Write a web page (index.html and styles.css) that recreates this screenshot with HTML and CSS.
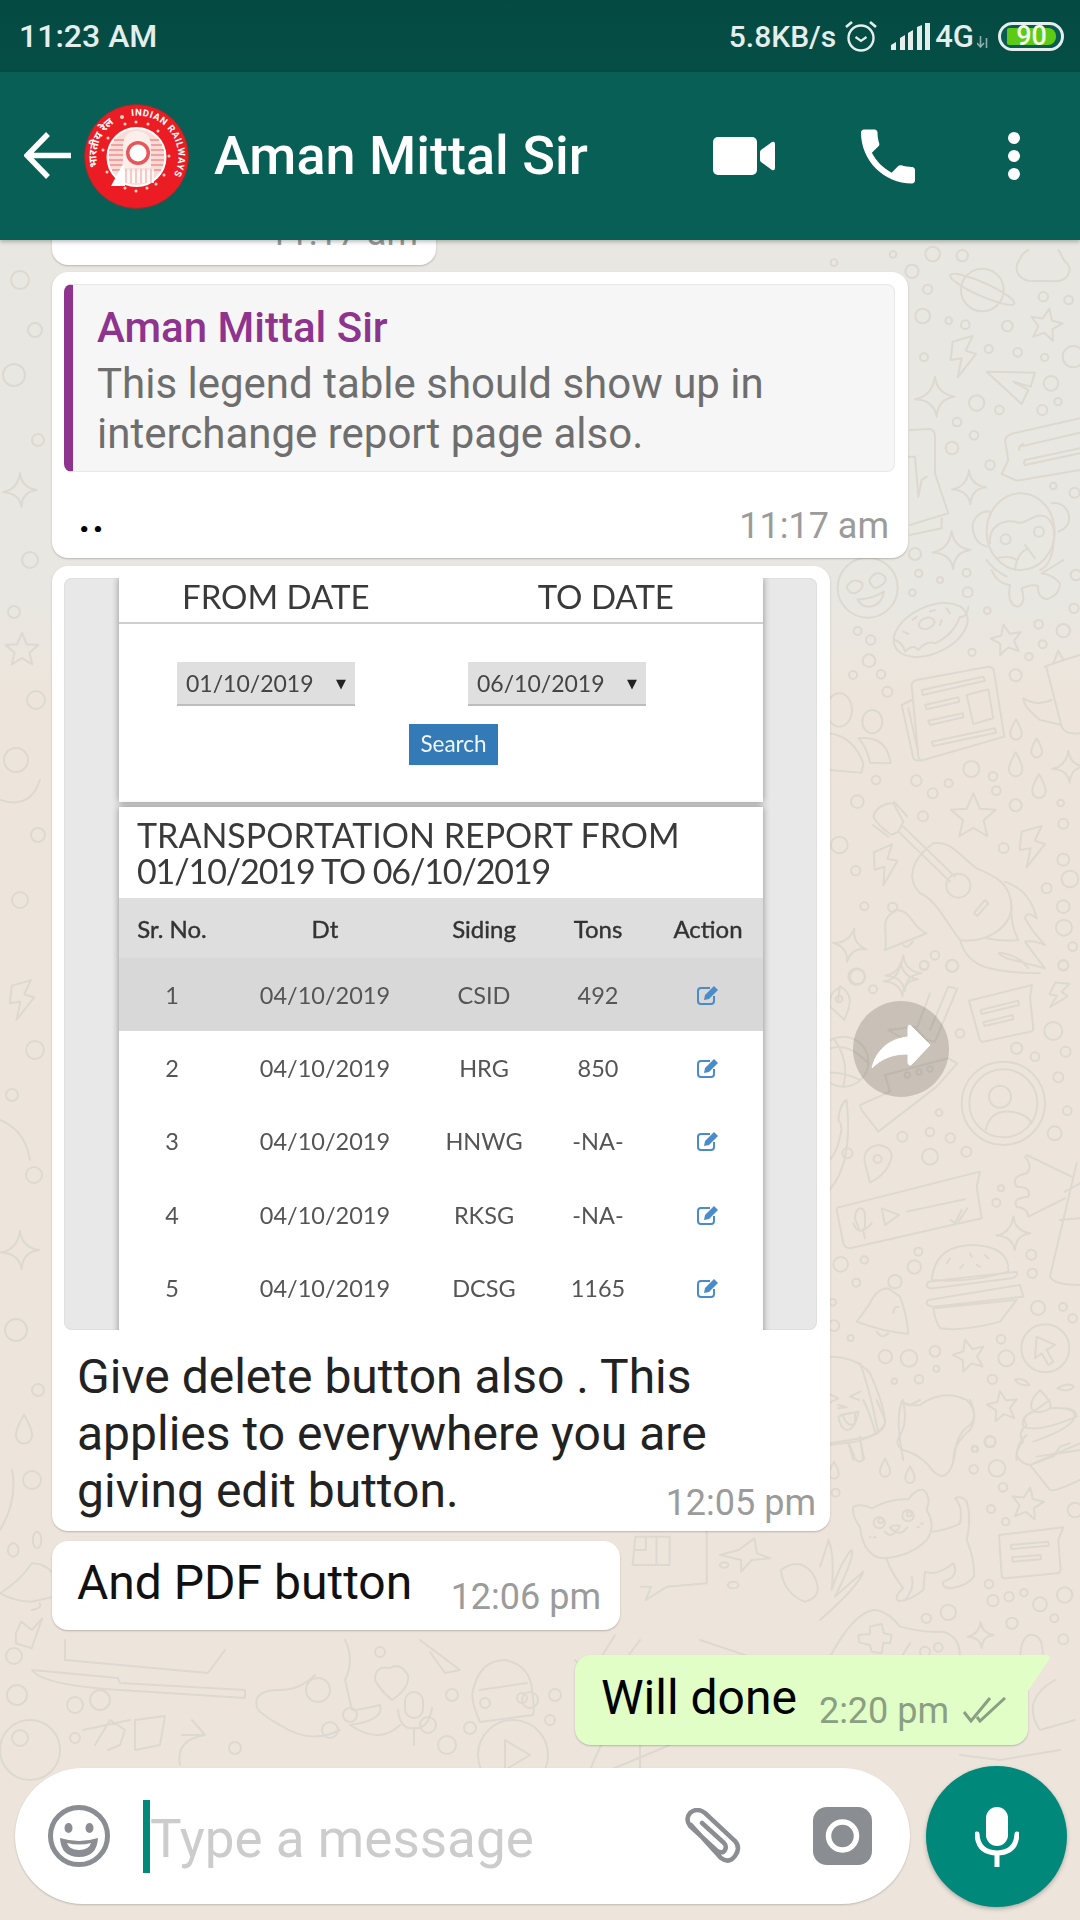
FILE: index.html
```html
<!DOCTYPE html>
<html lang="en">
<head>
<meta charset="utf-8">
<title>Aman Mittal Sir</title>
<link rel="stylesheet" href="styles.css">
</head>
<body>
<div class="phone">
  <div class="status">
    <span class="clock">11:23 AM</span>
    <div class="status-right">
      <span class="speed">5.8KB/s</span>
      <svg class="alarm" viewBox="0 0 32 32"><circle cx="16" cy="18" r="12.500" fill="none" stroke="#e4eeec" stroke-width="2.400"/><path d="M10.500 17l5.500 4 5.500-4" fill="none" stroke="#e4eeec" stroke-width="2.200"/><path d="M1 7l6-5M31 7l-6-5" fill="none" stroke="#e4eeec" stroke-width="2.600"/></svg>
      <svg class="signal" viewBox="0 0 39 27"><path d="M0 27v-5l5-3v8zM9 27V15l5-3v15zM17 27V10l5-3v20zM26 27V4l5-2v25zM34 27V0h5v27z" fill="#e4eeec"/></svg>
      <span class="net">4G</span>
      <svg class="arrows" viewBox="0 0 12 12"><path d="M3.500 0v10M0 7l3.500 4 3.500-4M9.500 12V2" fill="none" stroke="#8fb0aa" stroke-width="1.600"/></svg>
      <div class="battery"><div class="battery-fill">90</div></div>
    </div>
  </div>

  <header class="topbar">
    <svg class="back" viewBox="0 0 48 48"><path d="M47 23.500H4M24 2L3 23.500 24 45" fill="none" stroke="#fff" stroke-width="5.500"/></svg>
    <svg class="avatar" viewBox="0 0 105 105">
      <defs>
        <path id="ring-right" d="M47.500 12A41 41 0 1 1 39 91"/>
        <path id="ring-left" d="M14 63A40 40 0 0 1 35.600 16.200"/>
      </defs>
      <circle cx="52.500" cy="52.500" r="52" fill="#ec1c24" stroke="#7a3a34" stroke-width="1"/>
      <text class="emblem-text"><textPath href="#ring-right">INDIAN RAILWAYS</textPath></text>
      <text class="emblem-hindi"><textPath href="#ring-left">भारतीय रेल</textPath></text>
      <g fill="#fbd3c9"><circle cx="38" cy="13" r="2"/><circle cx="41" cy="20" r="1.500"/><circle cx="52" cy="18" r="1.500"/><circle cx="64" cy="20" r="1.500"/><circle cx="74" cy="27" r="1.500"/><circle cx="85" cy="52" r="1.500"/><circle cx="80" cy="71" r="1.500"/><circle cx="72" cy="80" r="1.500"/><circle cx="63" cy="84" r="1.500"/><circle cx="52" cy="87" r="1.500"/><circle cx="41" cy="84" r="1.500"/><circle cx="23" cy="68" r="1.500"/><circle cx="19" cy="46" r="1.500"/><circle cx="24" cy="34" r="1.500"/></g>
      <circle cx="52.500" cy="53" r="29" fill="#f9dcd6" stroke="#fff" stroke-width="2"/>
      <path d="M30 36h45M27 41h51M25 46h55M25 51h55M25 56h55M26 61h53M28 66h49" stroke="#e8666a" stroke-width="1.200" fill="none"/>
      <path d="M39 64V40Q41 27 53 27 65 27 67 40V64Z" fill="#fbeeeb"/>
      <circle cx="54" cy="49" r="12" fill="#e8565a"/><circle cx="54" cy="49" r="8.500" fill="#fff"/>
      <path d="M38 65H70V79H38Z" fill="#fff" opacity=".8"/>
      <path d="M42 65v14M47 65v14M52 65v14M57 65v14M62 65v14M67 65v14" stroke="#ef9a9a" stroke-width="1"/>
      <path d="M27 82L40 58 41 82Z" fill="#fff"/>
    </svg>
    <h1 class="title">Aman Mittal Sir</h1>
    <svg class="ico-video" viewBox="0 0 62 38"><rect width="44" height="38" rx="5" fill="#fff"/><path d="M47 15q0-1 1-2l11-8q3-1 3 2v24q0 3-3 2l-11-8q-1-1-1-2z" fill="#fff"/></svg>
    <svg class="ico-call" viewBox="3 3 18 18"><path d="M6.620 10.790c1.440 2.830 3.760 5.140 6.590 6.590l2.200-2.200c.27-.27.67-.36 1.020-.24 1.120.37 2.330.57 3.570.57.55 0 1 .45 1 1V20c0 .55-.45 1-1 1-9.390 0-17-7.610-17-17 0-.55.45-1 1-1h3.500c.55 0 1 .45 1 1 0 1.250.2 2.450.57 3.570.11.35.03.74-.25 1.020l-2.200 2.200z" fill="#fff"/></svg>
    <div class="ico-more"><i></i><i></i><i></i></div>
  </header>

  <main class="main">
    <svg class="doodles" viewBox="0 240 1080 1680" aria-hidden="true">
      <defs>
        <path id="star" d="M0-50L14-17 48-15 22 8 30 42 0 24-30 42-22 8-48-15-14-17Z"/>
        <path id="spark" d="M0-60Q6-8 60 0 8 6 5 60-4 10-60 8-8-2 0-60Z"/>
        <path id="drop" d="M0-38Q-22 0-20 14A20 20 0 0 0 20 14Q22 0 0-38Z"/>
        <path id="bolt" d="M28-62L-32-45-38 10-5 5-17 62 38-8 7-18Z"/>
      </defs>

      <g>
        <circle cx="20" cy="280" r="9"/><circle cx="35" cy="330" r="7"/><circle cx="14" cy="375" r="11"/><circle cx="38" cy="440" r="6"/><circle cx="30" cy="560" r="8"/><circle cx="14" cy="612" r="6"/><circle cx="36" cy="700" r="9"/><circle cx="16" cy="760" r="12"/><circle cx="38" cy="835" r="7"/><circle cx="20" cy="900" r="8"/><circle cx="35" cy="1050" r="9"/><circle cx="12" cy="1095" r="6"/><circle cx="34" cy="1175" r="8"/><circle cx="16" cy="1330" r="11"/><circle cx="38" cy="1390" r="6"/><circle cx="32" cy="1480" r="9"/>
        <use href="#spark" transform="translate(20 490) scale(.28)"/>
        <use href="#star" transform="translate(22 650) scale(.34)"/>
        <use href="#bolt" transform="translate(22 1000) scale(.32)"/>
        <use href="#spark" transform="translate(20 1250) scale(.32)"/>
        <use href="#drop" transform="translate(24 1430) scale(.4)"/>
        <path d="M0 1120Q25 1130 30 1160M0 800Q30 810 40 780M0 1530Q18 1500 12 1470"/>
      </g>

      <g transform="translate(820 250) scale(.3333)">
        <circle cx="42" cy="38" r="10"/><circle cx="219" cy="13" r="10"/><circle cx="338" cy="12" r="22"/><circle cx="427" cy="17" r="17"/><circle cx="276" cy="64" r="20"/><circle cx="323" cy="118" r="14"/><circle cx="308" cy="198" r="22"/><circle cx="386" cy="212" r="10"/><circle cx="436" cy="224" r="13"/><circle cx="562" cy="228" r="16"/><circle cx="670" cy="140" r="14"/><circle cx="746" cy="150" r="13"/><circle cx="506" cy="297" r="12"/><circle cx="593" cy="307" r="13"/><circle cx="674" cy="322" r="11"/><circle cx="312" cy="322" r="12"/><circle cx="470" cy="459" r="23"/><circle cx="538" cy="480" r="13"/><circle cx="693" cy="400" r="22"/><circle cx="714" cy="455" r="11"/><circle cx="667" cy="480" r="15"/><circle cx="411" cy="516" r="13"/><circle cx="462" cy="556" r="13"/><circle cx="396" cy="594" r="19"/><circle cx="510" cy="645" r="14"/><circle cx="700" cy="708" r="10"/><circle cx="764" cy="728" r="15"/><circle cx="285" cy="912" r="18"/><circle cx="760" cy="320" r="32"/>
        <circle cx="487" cy="120" r="64"/><ellipse cx="487" cy="118" rx="105" ry="20" transform="rotate(24 487 118)"/>
        <path d="M600 28C580 50 590 85 625 92L710 94C750 90 760 50 735 35 725 22 722 8 715 0M625 0C610 8 602 18 600 28"/>
        <use href="#star" transform="translate(678 225) rotate(12)"/>
        <path d="M458 258L398 275 392 330 425 325 413 382 468 312 437 302Z"/>
        <path d="M500 365L645 368 632 410 580 395 625 420 605 462Z"/>
        <path d="M555 570Q560 555 580 550L780 505M780 660L590 692 545 672 565 630 555 570"/>
        <path d="M600 590L780 548M598 600Q595 585 610 582M615 630L780 595M615 645L780 610M615 630Q610 640 615 645"/>
        <use href="#spark" transform="translate(345 440)"/>
        <use href="#spark" transform="translate(447 712) scale(.85)"/>
        <use href="#spark" transform="translate(395 900) scale(.95)"/>
        <path d="M270 540L330 537Q345 540 345 560L345 670 385 790 270 825M270 855L365 835 365 805M265 620L285 620 295 740 305 690 320 680"/>
        <ellipse cx="602" cy="845" rx="102" ry="115"/>
        <path d="M510 785C480 780 450 810 460 845 465 870 480 885 500 890M695 760C730 755 755 785 745 820 740 830 730 840 715 845"/>
        <path d="M510 880C505 830 545 810 585 815 605 825 620 810 650 798 690 790 710 830 700 885"/>
        <circle cx="557" cy="868" r="15"/><circle cx="657" cy="845" r="15"/>
        <path d="M530 925Q570 915 590 930M585 960Q590 910 625 895M615 885L645 925M700 890Q690 950 660 960"/>
      </g>

      <g transform="translate(820 560) scale(.3333)">
        <circle cx="143" cy="83" r="90"/><path d="M80 80Q100 50 125 68 135 85 105 100 85 100 80 80ZM148 60Q170 25 195 50 205 70 165 85 150 75 148 60ZM112 118Q150 120 192 95 185 135 150 140 125 142 112 118Z"/>
        <circle cx="296" cy="40" r="11"/><circle cx="360" cy="60" r="9"/><circle cx="440" cy="38" r="12"/><circle cx="277" cy="98" r="10"/><circle cx="443" cy="97" r="15"/><circle cx="768" cy="45" r="16"/><circle cx="502" cy="152" r="10"/><circle cx="762" cy="145" r="14"/><circle cx="656" cy="193" r="13"/><circle cx="730" cy="212" r="20"/><circle cx="113" cy="213" r="12"/><circle cx="152" cy="240" r="14"/><circle cx="456" cy="277" r="11"/><circle cx="668" cy="253" r="12"/><circle cx="627" cy="290" r="11"/><circle cx="147" cy="302" r="19"/><circle cx="99" cy="345" r="12"/><circle cx="183" cy="343" r="13"/><circle cx="587" cy="346" r="18"/><circle cx="202" cy="395" r="15"/><circle cx="168" cy="660" r="13"/><circle cx="289" cy="662" r="16"/><circle cx="338" cy="700" r="15"/><circle cx="386" cy="670" r="12"/><circle cx="454" cy="627" r="24"/><circle cx="519" cy="649" r="13"/><circle cx="529" cy="692" r="13"/><circle cx="112" cy="725" r="19"/><circle cx="587" cy="736" r="18"/><circle cx="722" cy="729" r="10"/><circle cx="309" cy="769" r="15"/><circle cx="730" cy="791" r="15"/><circle cx="551" cy="864" r="15"/><circle cx="730" cy="899" r="18"/><circle cx="750" cy="957" r="25"/><circle cx="58" cy="855" r="25"/><circle cx="107" cy="932" r="14"/><circle cx="680" cy="985" r="15"/><circle cx="730" cy="1040" r="19"/><circle cx="732" cy="1103" r="24"/><circle cx="133" cy="1039" r="12"/><circle cx="758" cy="1160" r="13"/><circle cx="345" cy="1186" r="13"/><circle cx="312" cy="1217" r="13"/><circle cx="396" cy="1218" r="18"/><circle cx="730" cy="1217" r="15"/><circle cx="110" cy="1250" r="25"/>
        <path d="M515 30Q530 70 570 75 560 130 590 140 620 135 605 85 640 70 655 80 650 110 680 118 720 105 720 70 700 45 665 40 700 20 730 0M500 0Q520 30 560 50"/>
        <ellipse cx="332" cy="210" rx="118" ry="70" transform="rotate(-25 332 210)"/><ellipse cx="320" cy="190" rx="24" ry="16" transform="rotate(-20 320 190)"/>
        <path d="M225 240Q250 250 255 275 280 250 295 270 320 240 345 250 400 225 420 170 440 175 445 140"/>
        <path d="M278 180L290 170M250 215L265 222M380 145L390 160M365 180L360 195M345 150L330 155"/>
        <use href="#star" transform="translate(560 240) rotate(-12) scale(.95)"/>
        <path d="M275 375Q275 365 290 360L505 320Q520 320 522 335L553 530 310 600Q300 605 295 590ZM275 420L245 435 280 595Q285 605 310 600M265 445L293 570"/>
        <path d="M305 390L490 350 495 362 308 405ZM315 435L415 412 418 425 320 448ZM325 482L428 460 430 472 330 495ZM335 545L525 505 528 518 340 558ZM440 405L505 388 520 475 460 492Z"/>
        <ellipse cx="58" cy="450" rx="38" ry="50"/><path d="M28 520Q100 530 130 610L125 638 28 630"/>
        <ellipse cx="157" cy="485" rx="30" ry="35"/><path d="M115 535Q200 525 212 610L150 608Q140 560 115 535Z"/>
        <use href="#drop" transform="translate(588 510) scale(.85)"/><use href="#drop" transform="translate(650 565) scale(.8)"/><use href="#drop" transform="translate(587 615)"/><use href="#drop" transform="translate(657 680)"/>
        <path d="M675 320Q700 310 780 285M680 325L725 500Q735 525 780 520M610 415Q650 440 695 420M610 415Q610 440 660 480L725 495M700 310L715 272 730 300"/>
        <use href="#spark" transform="translate(745 620) scale(.8)"/>
        <use href="#star" transform="translate(460 770) scale(1.400)"/>
        <path d="M212 730Q170 735 160 770 170 795 215 825L235 815 250 785 220 730ZM235 815L390 965M250 800L405 950"/>
        <path d="M222 725L262 770M158 795L205 830"/>
        <circle cx="415" cy="977" r="36"/>
        <path d="M340 850C395 840 420 890 470 925 530 950 570 970 575 1040 570 1110 490 1150 420 1140 380 1090 350 1020 300 1000 260 960 270 900 340 850Z"/>
        <path d="M462 1060L495 1020 505 1030 472 1068Z"/>
        <path d="M555 965Q630 990 650 1075 620 1050 615 1075 640 1120 675 1155 640 1140 615 1145 640 1180 675 1225L560 1195Q520 1175 550 1180 600 1190 625 1225M420 1140Q440 1210 510 1225 570 1240 660 1240M500 1135Q545 1145 595 1140 570 1090 575 1040"/>
        <use href="#bolt" transform="translate(637 860)"/>
        <use href="#bolt" transform="translate(198 915) scale(.95) rotate(-8)"/>
        <path d="M215 1060C180 1080 205 1130 195 1170L320 1120C270 1100 280 1050 225 1050ZM250 1155Q260 1170 278 1145"/><circle cx="218" cy="1042" r="14"/>
        <use href="#spark" transform="translate(90 1155) scale(.85) rotate(15)"/>
        <use href="#spark" transform="translate(250 1240) scale(.9)"/>
      </g>

      <g transform="translate(820 960) scale(.3333)">
        <circle cx="313" cy="15" r="13"/><circle cx="397" cy="17" r="18"/><circle cx="112" cy="50" r="22"/><circle cx="159" cy="88" r="12"/><circle cx="730" cy="15" r="15"/><circle cx="420" cy="220" r="13"/><circle cx="700" cy="213" r="27"/><circle cx="590" cy="265" r="17"/><circle cx="645" cy="290" r="13"/><circle cx="737" cy="275" r="15"/><circle cx="715" cy="352" r="15"/><circle cx="357" cy="458" r="10"/><circle cx="742" cy="452" r="13"/><circle cx="704" cy="520" r="21"/><circle cx="247" cy="530" r="15"/><circle cx="330" cy="516" r="13"/><circle cx="391" cy="534" r="14"/><circle cx="330" cy="590" r="24"/><circle cx="439" cy="575" r="15"/><circle cx="543" cy="685" r="9"/><circle cx="529" cy="728" r="12"/><circle cx="295" cy="875" r="12"/><circle cx="133" cy="900" r="11"/><circle cx="62" cy="913" r="22"/><circle cx="283" cy="921" r="20"/><circle cx="634" cy="884" r="15"/><circle cx="637" cy="940" r="14"/><circle cx="109" cy="968" r="12"/><circle cx="38" cy="1027" r="10"/><circle cx="42" cy="1097" r="16"/><circle cx="654" cy="1044" r="21"/><circle cx="729" cy="1041" r="12"/><circle cx="758" cy="1075" r="13"/><circle cx="92" cy="1134" r="9"/><circle cx="196" cy="1190" r="20"/><circle cx="267" cy="1195" r="25"/><circle cx="345" cy="1174" r="16"/><circle cx="349" cy="1226" r="9"/><circle cx="543" cy="1138" r="13"/><circle cx="559" cy="1195" r="24"/><circle cx="223" cy="1264" r="8"/><circle cx="297" cy="1258" r="13"/><circle cx="517" cy="1258" r="14"/><circle cx="511" cy="1445" r="15"/><circle cx="465" cy="1467" r="9"/>
        <use href="#spark" transform="translate(243 58) scale(.85)"/>
        <use href="#bolt" transform="translate(716 105) scale(.7) rotate(20)"/>
        <path d="M447 122L636 75 630 112 640 205Q640 215 630 215L490 245Q480 245 478 235Z"/><path d="M482 150L595 122 597 135 485 162ZM490 187L578 165 580 178 493 198Z"/>
        <circle cx="70" cy="305" r="75"/><path d="M0 280Q70 230 145 310M40 235Q90 300 70 380M0 340Q60 330 120 360"/>
        <path d="M330 100L285 220M412 85L345 245 320 240 285 200 205 210 255 240M405 85L385 80 330 210"/>
        <path d="M195 345L385 295 412 310 350 380 175 515 125 450 120 435 210 395Z"/><circle cx="262" cy="345" r="8"/><circle cx="297" cy="336" r="8"/><circle cx="330" cy="327" r="8"/>
        <circle cx="550" cy="430" r="125"/><circle cx="550" cy="430" r="102"/><circle cx="540" cy="410" r="33"/><path d="M497 510Q510 450 570 455 620 460 635 490"/>
        <path d="M175 555Q215 560 215 590 205 640 150 668L135 610Q125 565 175 555Z"/><circle cx="173" cy="597" r="12"/>
        <path d="M55 120Q60 70 60 80 85 90 90 120 88 150 72 180 55 160 30 140 25 100 55 85"/><circle cx="57" cy="117" r="10"/>
        <path d="M28 690Q100 610 80 420 60 430 55 480 70 500 60 530 50 580 28 600"/><circle cx="82" cy="580" r="15"/>
        <path d="M65 740L480 635 470 680 485 775 90 865Q75 865 70 850L50 750Q50 740 65 740Z"/>
        <path d="M120 745Q135 745 135 770L135 800Q130 815 118 810L105 775Q105 750 120 745ZM100 790Q115 835 155 790M130 815L135 835M185 745L237 765 195 795ZM260 755L435 718"/>
        <path d="M392 780L405 790 425 750M415 785L442 745"/>
        <path d="M620 585L755 650M615 590Q640 620 620 640 570 650 590 680 635 680 625 710 575 715 590 740 625 745 625 770L735 715"/>
        <path d="M770 610L690 950Q700 975 780 975M735 695Q780 670 780 670M720 780L780 775"/>
        <use href="#spark" transform="translate(580 820) scale(.85)"/>
        <path d="M335 960Q345 855 460 855 570 860 565 935 450 970 335 960ZM325 965L590 935Q595 950 575 955L340 985Q310 985 325 965ZM325 1020L600 975 610 1010 340 1040Q310 1035 325 1020ZM340 1045L590 1020 540 1085Q430 1115 360 1105 345 1080 340 1045Z"/>
        <path d="M380 910L390 895M420 925L430 915M450 880L455 890M495 885L505 895M470 915L480 920"/>
        <path d="M205 985Q170 985 150 1030 130 1060 110 1085 190 1115 265 1122 260 1060 240 1010ZM235 1040Q220 1040 220 1060"/><circle cx="225" cy="965" r="20"/><path d="M170 1115Q185 1140 205 1120"/>
        <circle cx="676" cy="1165" r="72"/><path d="M650 1130L705 1155 680 1170 700 1205 685 1215 665 1180 645 1195Z"/>
        <use href="#star" transform="translate(448 1187) rotate(-15)"/>
        <use href="#star" transform="translate(548 1340) rotate(-10) scale(.95)"/>
        <path d="M28 1190Q110 1190 150 1240 195 1340 195 1390 185 1420 110 1445L28 1455M120 1210Q150 1290 175 1420M25 1300L55 1315 25 1330M120 1295L90 1310 118 1320M55 1370Q85 1360 115 1355 105 1410 80 1410 60 1405 55 1370ZM85 1450L100 1500M120 1430L130 1500"/>
        <path d="M250 1500Q225 1380 245 1325 270 1340 300 1335 370 1285 440 1320 480 1360 450 1410 400 1450 400 1500"/>
        <path d="M660 1290Q620 1330 640 1355 600 1370 620 1395 590 1420 610 1445 585 1470 590 1500M660 1290Q700 1330 690 1345 780 1340 760 1380 740 1410 640 1445M640 1355Q670 1360 690 1345"/>
        <path d="M585 1260Q610 1250 628 1275 600 1280 585 1260ZM712 1285Q745 1265 762 1280 745 1300 712 1285ZM780 1470Q720 1480 650 1490"/>
      </g>

      <g transform="translate(820 1400) scale(.3333)">
        <path d="M100 320Q125 310 155 325 210 295 265 298 290 265 310 270 335 290 320 330 350 380 320 420 270 470 190 475 130 470 120 380 95 350 100 320Z"/>
        <circle cx="178" cy="368" r="17"/><circle cx="264" cy="347" r="17"/><circle cx="182" cy="362" r="7"/><circle cx="268" cy="342" r="7"/>
        <path d="M210 382Q225 372 240 378 235 392 225 392 215 392 210 382ZM195 395Q210 415 228 395 245 405 262 382M148 412L152 412M162 412L166 412M293 382L297 380M304 372L308 370"/>
        <path d="M200 478Q215 520 250 565 220 590 235 603 265 605 310 570L315 515Q350 530 400 490 420 530 370 545 365 565 395 565 445 555 462 530 465 480 440 420 455 350 440 305 425 285 405 295 430 320 420 370 400 385 340 395M275 530Q285 565 255 600"/>
        <path d="M250 0Q240 10 270 15L300 0M450 0Q475 50 450 75 410 100 405 160 395 225 365 228 345 225 325 195 290 160 250 150 225 135 235 115 265 70 250 10"/>
        <path d="M30 130L150 110Q200 90 195 60L170 0M85 125L105 175Q120 195 132 175L120 120M60 45L115 35M70 50Q85 85 105 70L105 40M130 0Q150 40 165 95M55 15L80 22 55 25"/>
        <use href="#drop" transform="translate(195 205) scale(.75)"/><use href="#drop" transform="translate(270 225) scale(.7)"/><use href="#drop" transform="translate(42 212) scale(.7)"/>
        <circle cx="510" cy="125" r="17"/><circle cx="464" cy="147" r="9"/><circle cx="531" cy="205" r="25"/><circle cx="461" cy="208" r="13"/><circle cx="549" cy="262" r="13"/><circle cx="513" cy="327" r="12"/><circle cx="557" cy="365" r="11"/><circle cx="765" cy="330" r="22"/><circle cx="507" cy="552" r="13"/><circle cx="519" cy="602" r="17"/><circle cx="567" cy="590" r="14"/><circle cx="612" cy="578" r="11"/><circle cx="660" cy="613" r="21"/><circle cx="734" cy="585" r="23"/><circle cx="703" cy="655" r="12"/><circle cx="576" cy="670" r="17"/><circle cx="730" cy="718" r="15"/><circle cx="319" cy="655" r="14"/><circle cx="385" cy="637" r="23"/><circle cx="47" cy="278" r="12"/><circle cx="315" cy="755" r="15"/><circle cx="355" cy="742" r="13"/>
        <use href="#star" transform="translate(622 312) rotate(10)"/>
        <path d="M537 405L730 382 715 420 722 510Q720 520 710 520L555 535Q545 535 545 525Z"/><path d="M572 435L685 425 686 437 574 447ZM576 472L662 465 663 478 578 485Z"/>
        <path d="M620 105Q590 130 590 165 600 190 630 195L690 270Q700 278 780 240M640 190L780 130M610 80Q650 100 770 50 770 30 740 25M610 80Q600 50 640 35L690 0M630 195L700 170 720 140 750 130"/>
        <use href="#spark" transform="translate(482 705) scale(.65)"/>
        <path d="M0 500Q30 410 25 420 45 470 35 570 65 480 95 450 105 470 45 590 100 540 130 515 115 560 0 660"/>
        <path d="M30 770Q100 640 160 630 200 630 240 680 320 700 370 695 420 710 420 770"/>
        <path d="M150 680L185 672 192 700 215 705 210 730 190 728 185 760 155 755 150 735 118 728 115 705 150 702ZM270 730L245 770 260 770"/>
        <path d="M600 770Q605 700 640 705 670 710 668 770"/>
      </g>

      <g transform="translate(0 1530) scale(.5294 .3333)">
        <path d="M1200 20L1195 105 1265 105 1265 20ZM1220 25V60H1200M1240 25V105M1335 20V160L1260 170 1220 210 1230 170 1210 170M1335 0V20"/>
        <path d="M0 190Q40 150 60 100 85 100 100 130 130 170 160 175 110 200 60 215 30 215 0 190ZM75 220Q80 235 60 240M40 275L60 300 80 265 65 330 60 355 30 340 30 310 40 275Z"/>
        <ellipse cx="70" cy="30" rx="8" ry="25"/><ellipse cx="25" cy="60" rx="10" ry="20"/>
        <path d="M1395 60L1425 25 1430 70 1455 85 1420 90 1400 125 1400 90 1360 75ZM1475 120Q1510 80 1535 130 1560 200 1520 215 1480 190 1475 120Z"/>
        <circle cx="1368" cy="105" r="8"/><circle cx="1385" cy="165" r="10"/>
      </g>

      <g>
        <circle cx="14" cy="1656" r="8"/><circle cx="17" cy="1695" r="10"/><circle cx="100" cy="1700" r="10"/><circle cx="75" cy="1705" r="8"/><circle cx="20" cy="1738" r="8"/><circle cx="75" cy="1738" r="5"/><circle cx="235" cy="1748" r="6"/><circle cx="380" cy="1652" r="5"/><circle cx="318" cy="1690" r="12"/><circle cx="330" cy="1730" r="8"/><circle cx="350" cy="1715" r="7"/><circle cx="428" cy="1725" r="8"/><circle cx="447" cy="1745" r="9"/><circle cx="470" cy="1728" r="6"/><circle cx="530" cy="1700" r="8"/><circle cx="550" cy="1720" r="5"/><circle cx="452" cy="1695" r="6"/><circle cx="555" cy="1695" r="6"/>
        <path d="M65 1640L65 1660 208 1673 225 1650M32 1670L118 1678 120 1683 245 1690 245 1698 120 1690Q42 1685 32 1670Z"/>
        <path d="M345 1640Q355 1660 345 1680L352 1710Q360 1710 380 1705 385 1720 350 1725 380 1745 400 1725M315 1675Q300 1690 280 1690 250 1690 258 1710 270 1720 280 1725 310 1745 340 1730"/>
        <path d="M390 1668Q375 1665 375 1680 380 1690 392 1700 410 1688 408 1675 400 1662 390 1668Z"/>
        <path d="M473 1690Q480 1660 505 1660 530 1665 532 1690 535 1710 533 1715L480 1722Q470 1700 473 1690ZM480 1690L527 1683"/><circle cx="485" cy="1703" r="5"/><circle cx="522" cy="1698" r="5"/>
        <rect x="405" y="1692" width="18" height="26" rx="9"/><path d="M398 1710Q400 1730 414 1728 428 1730 432 1708M414 1728V1745"/>
        <path d="M420 1640L460 1670 445 1673 430 1652M590 1675L615 1635M610 1680L640 1640M575 1660L610 1700M760 1660L700 1640"/>
        <circle cx="30" cy="1750" r="30"/><circle cx="513" cy="1755" r="35"/><path d="M505 1740L530 1755 505 1770Z"/>
        <path d="M83 1730L130 1720M95 1745L110 1720 125 1730 120 1745 108 1750M135 1720L165 1716 160 1745 135 1750ZM205 1735Q175 1740 180 1765M205 1735L192 1720M205 1735L182 1735"/>
        <path d="M610 1730Q600 1745 590 1770M640 1700V1770M670 1745L610 1770M630 1730L655 1720Q680 1735 640 1745"/>
        <path d="M1055 1680Q1020 1700 1040 1730L1075 1720M960 1755L1000 1760 1060 1750"/>
      </g>
    </svg>

    <section class="chat">
      <article class="bubble stub"><span class="time">11:17 am</span></article>

      <article class="bubble reply">
        <blockquote class="quote">
          <strong class="quote-name">Aman Mittal Sir</strong>
          <p class="quote-text">This legend table should show up in<br>interchange report page also.</p>
        </blockquote>
        <div class="reply-row"><span class="dots">..</span><span class="time">11:17 am</span></div>
      </article>

      <div class="image-row">
        <article class="bubble media">
          <div class="shot">
            <div class="shot-card filter-card">
              <div class="date-heads"><span>FROM DATE</span><span>TO DATE</span></div>
              <div class="date-selects">
                <div class="select"><span>01/10/2019</span><b>▼</b></div>
                <div class="select"><span>06/10/2019</span><b>▼</b></div>
              </div>
              <div class="search">Search</div>
            </div>
            <div class="shot-card report-card">
              <h2 class="report-title">TRANSPORTATION REPORT FROM<br><span class="report-dates">01/10/2019 TO 06/10/2019</span></h2>
              <div class="t-row t-head"><span>Sr. No.</span><span>Dt</span><span>Siding</span><span>Tons</span><span>Action</span></div>
              <div class="t-row t-hi"><span>1</span><span>04/10/2019</span><span>CSID</span><span>492</span><span><svg class="edit" viewBox="0 0 22 20"><use href="#edit-icon"/></svg></span></div>
              <div class="t-row"><span>2</span><span>04/10/2019</span><span>HRG</span><span>850</span><span><svg class="edit" viewBox="0 0 22 20"><use href="#edit-icon"/></svg></span></div>
              <div class="t-row"><span>3</span><span>04/10/2019</span><span>HNWG</span><span>-NA-</span><span><svg class="edit" viewBox="0 0 22 20"><use href="#edit-icon"/></svg></span></div>
              <div class="t-row"><span>4</span><span>04/10/2019</span><span>RKSG</span><span>-NA-</span><span><svg class="edit" viewBox="0 0 22 20"><use href="#edit-icon"/></svg></span></div>
              <div class="t-row"><span>5</span><span>04/10/2019</span><span>DCSG</span><span>1165</span><span><svg class="edit" viewBox="0 0 22 20"><use href="#edit-icon"/></svg></span></div>
            </div>
          </div>
          <p class="caption">Give delete button also . This applies to everywhere you are giving edit button.<span class="time time-float">12:05 pm</span></p>
        </article>
        <div class="forward"><svg viewBox="0 0 96 96"><path d="M77 44L57 24Q55 24 55 27L55 36C35 38 23 50 19 67 29 57 40 53 55 53L55 62Q56 65 58 64Z" fill="#fff" stroke="#fff" stroke-linejoin="round"/></svg></div>
      </div>

      <article class="bubble line pdf"><p class="line-text">And PDF button</p><span class="time line-time">12:06 pm</span></article>

      <article class="bubble line sent"><p class="line-text">Will done</p><span class="time line-time">2:20 pm</span>
        <svg class="ticks" viewBox="0 0 44 26"><path d="M1 15l7 9L27 1M14 20l3 4L42 1" fill="none" stroke="#8b9f83" stroke-width="3"/></svg>
      </article>
    </section>

    <form class="composer">
      <div class="input">
        <svg class="emoji" viewBox="0 0 64 64"><circle cx="32" cy="32" r="28.500" fill="#fff" stroke="#8a8d91" stroke-width="5"/><ellipse cx="21.500" cy="24" rx="4" ry="5" fill="#8a8d91"/><ellipse cx="42.500" cy="24" rx="4" ry="5" fill="#8a8d91"/><path d="M13 34Q32 40 51 34 50 53 32 53 14 53 13 34Z" fill="#8a8d91"/><path d="M20 39Q32 42 44 39 42 46 32 46 22 46 20 39Z" fill="#fff"/></svg>
        <i class="cursor"></i>
        <span class="placeholder">Type a message</span>
        <svg class="clip" viewBox="0 0 64 56"><path d="M14 17L44 50Q52 56 58 48 64 40 58 33L28 5Q20 -1 13 5 8 11 13 18L40 43Q46 46 48 42 50 38 47 35L25 15" fill="none" stroke="#8a8d91" stroke-width="4.500" stroke-linecap="round"/></svg>
        <svg class="camera" viewBox="0 0 59 58"><rect width="59" height="58" rx="14" fill="#8a8d91"/><circle cx="29.500" cy="29" r="14" fill="none" stroke="#fff" stroke-width="5.500"/></svg>
      </div>
      <div class="mic"><svg viewBox="0 0 44 60"><rect x="11" y="0" width="22" height="39" rx="11" fill="#fff"/><path d="M2 27Q3 46 22 46 41 46 42 27" fill="none" stroke="#fff" stroke-width="5" stroke-linecap="round"/><path d="M22 46v14" stroke="#fff" stroke-width="5"/></svg></div>
    </form>
  </main>
  <svg class="defs-only" aria-hidden="true"><defs><g id="edit-icon"><path d="M17 11v5q0 3-3 3H4q-3 0-3-3V6q0-3 3-3h9" fill="none" stroke="#4a8bc9" stroke-width="2"/><path d="M8 10L17 1l4 4-9 9-5 1z" fill="#4a8bc9"/></g></defs></svg>
</div>
</body>
</html>
```

FILE: styles.css
```css
* { box-sizing: border-box; }
html, body { margin: 0; padding: 0; }
body { width: 1080px; height: 1920px; overflow: hidden; font-family: Roboto, "Liberation Sans", sans-serif; background: #ede5dc; }
p, h1, h2, blockquote { margin: 0; font-weight: 400; }

.phone { width: 1080px; height: 1920px; display: flex; flex-direction: column; overflow: hidden; }
.defs-only { width: 0; height: 0; }

/* status bar */
.status { height: 72px; flex: none; background: linear-gradient(#044a42, #054e46); color: #e4eeec; display: flex; align-items: center; justify-content: space-between; padding: 0 16px 0 19px; font-weight: 500; font-size: 30px; }
.clock { font-size: 32px; line-height: 72px; }
.status-right { display: flex; align-items: center; }
.speed { margin-right: 9px; }
.alarm { width: 32px; height: 32px; margin-right: 14px; }
.signal { width: 39px; height: 27px; margin-right: 5px; }
.net { margin-right: 3px; font-size: 31px; }
.arrows { width: 12px; height: 12px; margin: 12px 9px 0 0; }
.battery { width: 66px; height: 29px; border: 3px solid #e4eeec; border-radius: 15px; padding: 3px 3px 3px 6px; background: #0a5b50; }
.battery-fill { height: 17px; width: 49px; background: #5dcb16; border-radius: 2px 8px 8px 2px; color: #f4fbe9; font-size: 27px; line-height: 17px; text-align: center; }

/* app bar */
.topbar { height: 168px; flex: none; background: #085f55; display: flex; align-items: center; padding: 0 60px 0 24px; position: relative; z-index: 2; box-shadow: 0 2px 4px rgba(0,0,0,.25); }
.back { width: 48px; height: 48px; margin-right: 12px; flex: none; }
.avatar { width: 105px; height: 105px; flex: none; margin-right: 25px; }
.emblem-text { fill: #fff; font: 700 9.500px Roboto, sans-serif; letter-spacing: .7px; }
.emblem-hindi { fill: #fff; font: 700 11px "Noto Sans", "Noto Sans CJK SC", sans-serif; }
.title { color: #fff; font-size: 54px; line-height: 60px; font-weight: 500; flex: 1; white-space: nowrap; }
.ico-video { width: 62px; height: 38px; flex: none; margin-right: 86px; }
.ico-call { width: 54px; height: 55px; flex: none; margin-right: 93px; }
.ico-more { width: 12px; flex: none; display: flex; flex-direction: column; gap: 6px; }
.ico-more i { width: 12px; height: 12px; border-radius: 50%; background: #fff; }

/* chat */
.main { flex: 1; min-height: 0; position: relative; display: flex; flex-direction: column; background: linear-gradient(#e9e7e1 0, #e9e7e1 370px, #ede5dc 450px, #ede5dc 100%); }
.doodles { position: absolute; left: 0; top: 0; width: 1080px; height: 1680px; fill: none; stroke: #ddd9d1; stroke-width: 2px; stroke-linejoin: round; stroke-linecap: round; }
.doodles * { vector-effect: non-scaling-stroke; }
.chat { flex: 1; min-height: 0; position: relative; display: flex; flex-direction: column; justify-content: flex-end; align-items: flex-start; overflow: hidden; padding: 0 52px 21px; }

.bubble { background: #fff; border-radius: 16px; box-shadow: 0 1px 2px rgba(0,0,0,.22); flex: none; }
.time { font-size: 36px; line-height: 40px; color: #9b9b9b; white-space: nowrap; }

.stub { width: 384px; padding: 0 18px 12px; text-align: right; margin-bottom: 7px; }
.reply { width: 856px; padding: 12px 13px 12px 12px; margin-bottom: 8px; }
.quote { height: 188px; background: #f6f6f6; border: 1px solid #e8e8e8; border-left: 9px solid #8e338e; border-radius: 8px; padding: 18px 24px 0; }
.quote-name { display: block; color: #8e338e; font-size: 42px; line-height: 50px; font-weight: 500; }
.quote-text { color: #6e6e6e; font-size: 42px; line-height: 50px; margin-top: 6px; }
.reply-row { display: flex; justify-content: space-between; align-items: flex-start; margin-top: 34px; padding: 0 6px 0 14px; }
.dots { font-size: 46px; line-height: 20px; letter-spacing: 1px; color: #000; font-weight: 500; }

.image-row { display: flex; align-items: center; gap: 23px; margin-bottom: 10px; flex: none; }
.media { width: 778px; padding: 12px 13px 12px 12px; }
.shot { height: 752px; background: #e8e8e8; border-radius: 8px; overflow: hidden; padding: 0 54px 0 55px; font-family: Lato, "Open Sans", sans-serif; color: #333; filter: blur(.35px); box-shadow: inset 0 0 0 1px #e0e0e0; }
.shot-card { background: #fff; box-shadow: 0 0 7px rgba(0,0,0,.4); }
.filter-card { height: 224px; }
.date-heads { height: 46px; border-bottom: 2px solid #cfcfcf; display: flex; gap: 168px; padding-left: 63px; font-size: 33px; line-height: 36px; font-weight: 400; color: #3a3a3a; }
.date-selects { display: flex; gap: 113px; padding: 38px 0 0 58px; }
.select { width: 178px; height: 44px; background: #dfdfdf; border-bottom: 2px solid #bdbdbd; display: flex; justify-content: space-between; align-items: center; padding: 0 9px; font-size: 23px; color: #444; }
.select b { font: 400 13px "DejaVu Sans", sans-serif; color: #222; }
.search { width: 89px; height: 41px; margin: 18px 0 0 290px; background: #337ab7; color: #f2f6fa; font-size: 22.500px; line-height: 40px; text-align: center; }
.report-card { margin-top: 5px; height: 560px; }
.report-title { font-size: 34px; line-height: 36px; font-weight: 400; padding: 10px 0 9px 18px; white-space: nowrap; color: #3a3a3a; }
.report-dates { letter-spacing: -1.100px; }
.t-row { display: grid; grid-template-columns: 106px 200px 118px 110px 110px; height: 73.300px; align-items: center; text-align: center; font-size: 23.500px; color: #555; }
.t-head { height: 60px; background: #dedede; font-weight: 400; color: #333; font-size: 24px; -webkit-text-stroke: .4px #333; }
.t-hi { background: #d8d8d8; }
.edit { width: 22px; height: 20px; display: block; margin: 0 auto; }

.caption { font-size: 48px; line-height: 57px; color: #222; padding: 18px 0 0 13px; display: flow-root; }
.time-float { float: right; margin-top: 21px; margin-bottom: -21px; margin-right: 1px; }

.forward { width: 96px; height: 96px; border-radius: 50%; background: rgba(60,50,40,.2); flex: none; }
.forward svg { width: 96px; height: 96px; display: block; }

.line { display: flex; align-items: flex-start; }
.line-text { font-size: 48px; line-height: 57px; color: #111; white-space: nowrap; }
.pdf { width: 568px; padding: 13px 19px 13px 25px; justify-content: space-between; margin-bottom: 25px; }
.line-time { margin-top: 23px; }
.sent { align-self: flex-end; width: 453px; padding: 14px 21px 14px 26px; background: #e1fec7; border-top-right-radius: 0; position: relative; }
.sent::after { content: ""; position: absolute; top: 0; left: 100%; width: 22px; height: 36px; background: #e1fec7; clip-path: polygon(0 0, 92% 0, 100% 8%, 0 100%); }
.sent .line-text { color: #000; margin-right: 22px; }
.sent .line-time { margin-top: 22px; color: #8b9f83; margin-right: 14px; }
.ticks { width: 44px; height: 26px; margin-top: 28px; flex: none; }

/* composer */
.composer { flex: none; height: 154px; display: flex; align-items: flex-start; gap: 16px; padding: 0 13px 0 15px; position: relative; }
.input { width: 895px; height: 136px; margin-top: 2px; background: #fff; border-radius: 68px; box-shadow: 0 1px 2px rgba(0,0,0,.2); display: flex; align-items: center; padding-left: 32px; }
.emoji { width: 64px; height: 64px; flex: none; margin-right: 32px; }
.cursor { width: 7px; height: 73px; background: #00897b; flex: none; }
.placeholder { flex: 1; color: #cccccc; font-size: 53px; margin-top: 6px; }
.clip { width: 64px; height: 56px; flex: none; margin-right: 72px; }
.camera { width: 59px; height: 58px; flex: none; margin-right: 38px; }
.mic { width: 141px; height: 141px; border-radius: 50%; background: #00897b; flex: none; display: flex; align-items: center; justify-content: center; box-shadow: 0 2px 4px rgba(0,0,0,.25); }
.mic svg { width: 44px; height: 60px; }
```
